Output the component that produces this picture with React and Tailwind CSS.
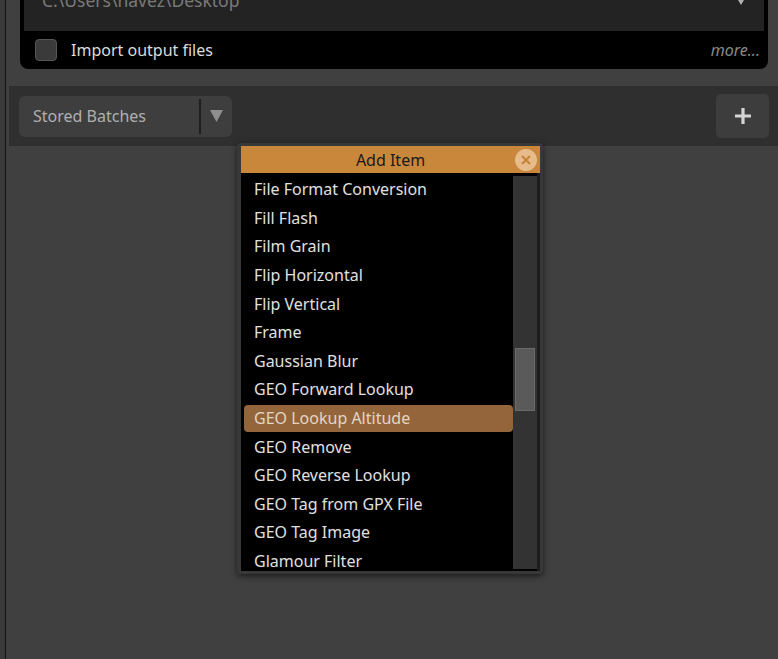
import React from 'react';

const items = [
  'File Format Conversion',
  'Fill Flash',
  'Film Grain',
  'Flip Horizontal',
  'Flip Vertical',
  'Frame',
  'Gaussian Blur',
  'GEO Forward Lookup',
  'GEO Lookup Altitude',
  'GEO Remove',
  'GEO Reverse Lookup',
  'GEO Tag from GPX File',
  'GEO Tag Image',
  'Glamour Filter',
];

const selected = 'GEO Lookup Altitude';

const App = () => {
  return (
    <div className="relative flex h-[659px] w-[778px] overflow-hidden bg-[#404040] font-['Noto_Sans',sans-serif] text-[16px]">
      {/* left edge */}
      <div className="w-[5px] shrink-0 bg-[#3a3a3a]" />
      <div className="w-px shrink-0 bg-[#151515]" />

      <div className="flex flex-1 flex-col">
        {/* output panel (scrolled up) */}
        <div className="-mt-[30px] ml-[14px] mr-[10px] rounded-b-[8px] bg-black">
          <div className="mx-[4px] flex h-[61px] items-start justify-between bg-[#232323] pl-[18px] pr-[17px] pt-[18px]">
            <span className="text-[17.5px] leading-[24px] text-[#7a7a7a]">C:\Users\havez\Desktop</span>
            <svg className="mt-[7px]" width="12" height="10" viewBox="0 0 12 10">
              <path d="M0 0h12L6 10z" fill="#b0b0b0" />
            </svg>
          </div>
          <div className="flex h-[38px] items-center pl-[15px] pr-[8px]">
            <div className="h-[22px] w-[22px] rounded-[4px] border border-[#555] bg-[#3a3a3a]" />
            <span className="ml-[14px] text-[#dcdcdc]">Import output files</span>
            <span className="ml-auto text-[16px] italic text-[#8a8a8a]">more...</span>
          </div>
        </div>

        <div className="h-[17px]" />

        {/* batches bar */}
        <div className="ml-[3px] flex h-[60px] items-center justify-between bg-[#2f2f2f] pl-[10px] pr-[9px]">
          <div className="flex h-[41px] w-[213px] items-center rounded-[6px] bg-[#3e3e3e]">
            <span className="ml-[14px] flex-1 text-[#b0b0b0]">Stored Batches</span>
            <div className="h-[35px] w-[2px] bg-[#1e1e1e]" />
            <svg className="mx-[9px]" width="13" height="12" viewBox="0 0 13 12">
              <path d="M0 0h13L6.5 12z" fill="#8f8f8f" />
            </svg>
          </div>
          <div className="flex h-[44px] w-[53px] items-center justify-center rounded-[5px] bg-[#3d3d3d]">
            <svg width="18" height="18" viewBox="0 0 18 18">
              <path d="M9 1v16M1 9h16" stroke="#d4d4d4" strokeWidth="3.2" />
            </svg>
          </div>
        </div>
      </div>

      {/* Add Item popup */}
      <div className="absolute left-[237px] top-[143px] w-[306px] rounded-[4px] bg-[#383838] pb-[3px] pl-[4px] pr-[3px] pt-[3px] shadow-[0_2px_6px_rgba(0,0,0,0.6)]">
        <div className="relative flex h-[27px] items-center justify-center bg-[#c8873a]">
          <span className="text-[#1a1a1a]">Add Item</span>
          <div className="absolute right-[3px] top-[2.5px] flex h-[22px] w-[22px] items-center justify-center rounded-full bg-[#e6bc8c]">
            <svg width="12" height="12" viewBox="0 0 12 12">
              <path d="M2 2l8 8M10 2l-8 8" stroke="#c8873a" strokeWidth="2.4" />
            </svg>
          </div>
        </div>
        <div className="flex h-[398px] overflow-hidden bg-black">
          <div className="flex-1 pt-[2px]">
            {items.map((it) => (
              <div key={it} className="flex h-[28.6px] items-center">
                <div
                  className={
                    it === selected
                      ? 'ml-[3px] flex h-[27px] flex-1 items-center rounded-[4px] bg-[#94653a] pl-[10px] text-[#e2d6c8]'
                      : 'ml-[3px] flex h-[27px] flex-1 items-center pl-[10px] text-[#e0e0e0]'
                  }
                >
                  {it}
                </div>
              </div>
            ))}
          </div>
          <div className="mb-[2px] mt-[3px] w-[24px] bg-[#333]">
            <div className="ml-[2px] mt-[172px] h-[63px] w-[20px] border border-[#6a6a6a] bg-[#5a5a5a]" />
          </div>
          <div className="w-[3px] bg-[#1c1c1c]" />
        </div>
      </div>
    </div>
  );
};

export default App;
